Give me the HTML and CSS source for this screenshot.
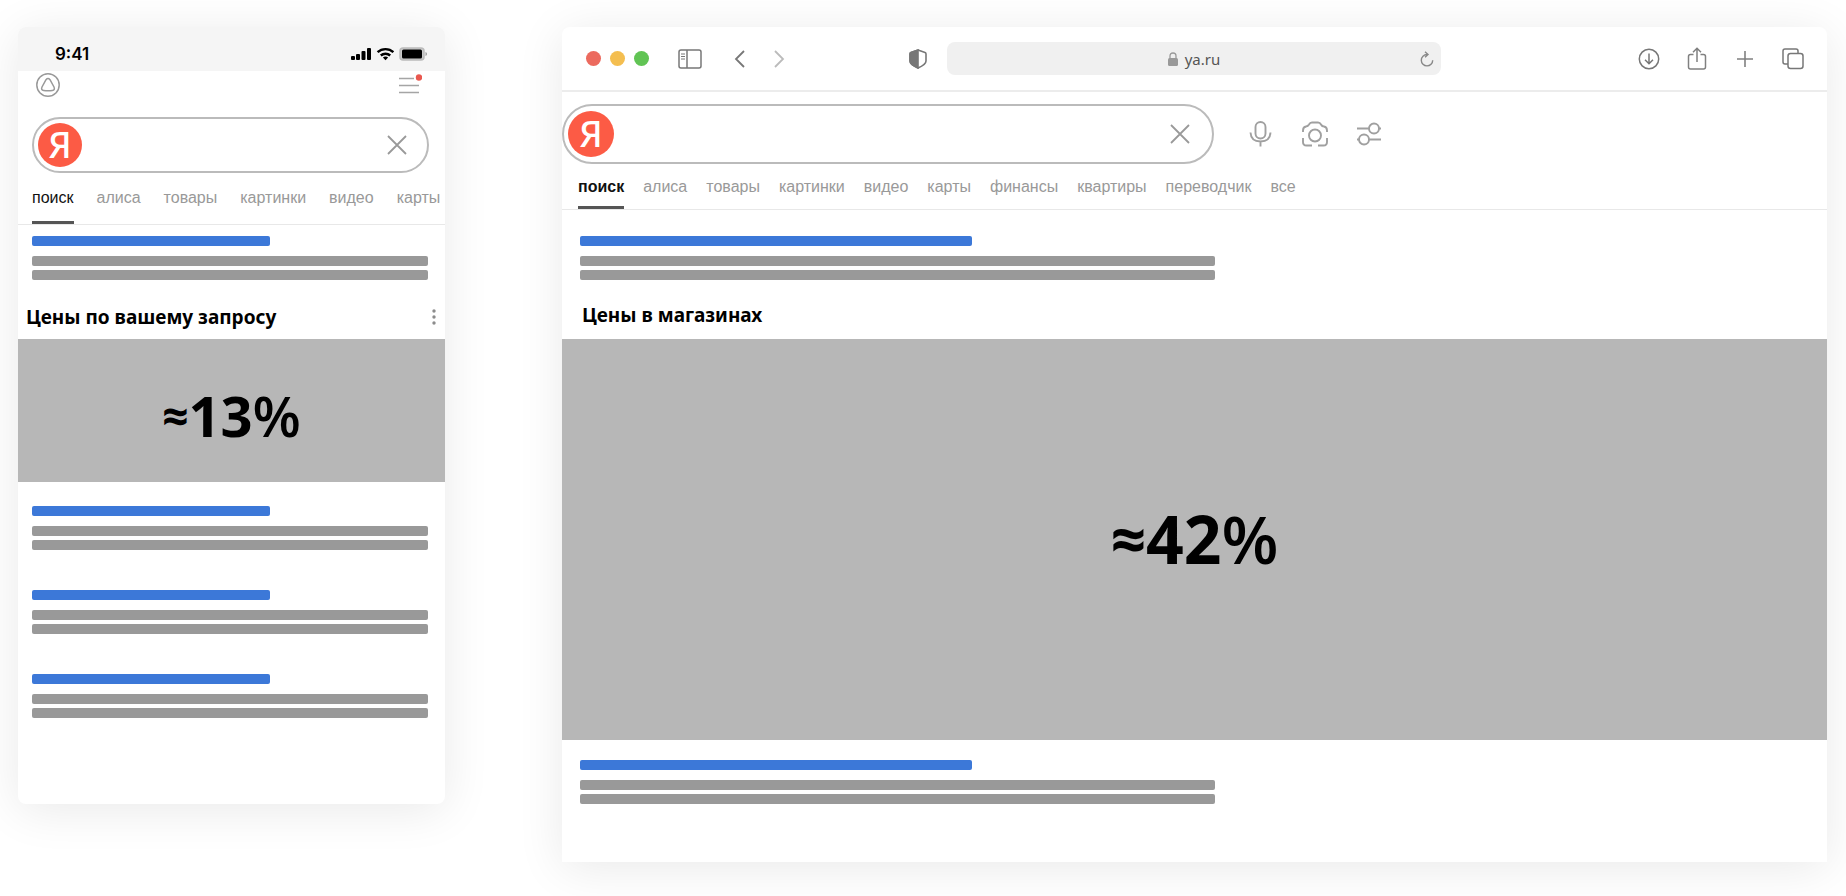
FILE: index.html
```html
<!DOCTYPE html>
<html lang="ru">
<head>
<meta charset="utf-8">
<title>Цены в поиске</title>
<link rel="stylesheet" href="styles.css">
</head>
<body>
<main class="stage">
  <section class="screen phone" aria-label="Мобильная версия">
    <header class="status">
      <span class="clock">9:41</span>
      <svg width="76" height="14" viewBox="0 0 76 14" aria-hidden="true">
        <rect x="0" y="9" width="4" height="4" rx="1"/><rect x="5" y="7" width="4" height="6" rx="1"/><rect x="10.500" y="4" width="4" height="9" rx="1"/><rect x="16" y="1" width="4" height="12" rx="1"/>
        <g fill="none" stroke="#000" stroke-width="2.400"><path d="M26.600 5.200a11.600 11.600 0 0 1 15.800 0"/><path d="M29.800 8.500a7 7 0 0 1 9.400 0"/></g>
        <path d="M34.500 13.300l-2.600-2.700a3.800 3.800 0 0 1 5.200 0z"/>
        <rect x="49" y="1" width="24" height="12" rx="3" fill="#ccc" stroke="#bbb" stroke-width="1.500"/><rect x="51" y="2.500" width="20" height="9" rx="1.500"/><path d="M74.500 5v4q1.500-.5 1.500-2t-1.500-2z" fill="#999"/>
      </svg>
    </header>
    <div class="phone-top">
      <a href="#" class="icon" aria-label="Алиса"><svg width="24" height="24" viewBox="0 0 24 24" fill="none" stroke="#999" stroke-width="1.500"><circle cx="12" cy="12" r="11.200"/><path d="M10 6.700q2-2.400 4 0l4 7.300q1.300 3-1.700 3.500-4.300.7-8.600 0-3-.5-1.700-3.500z"/></svg></a>
      <button class="icon" aria-label="Меню"><svg width="24" height="24" viewBox="0 0 24 24"><path d="M1 5.500h15M1 12.500h20M1 19.500h20" stroke="#a5a5a5" stroke-width="1.700"/><circle cx="21" cy="4.500" r="3.200" fill="#e9584f"/></svg></button>
    </div>
    <form class="search">
      <a href="#" class="logo" aria-label="Яндекс">Я</a>
      <input type="text" aria-label="Запрос">
      <button type="reset" class="icon" aria-label="Очистить"><svg width="20" height="20" viewBox="0 0 20 20"><path d="M1 1l18 18M19 1L1 19" stroke="#999" stroke-width="1.800"/></svg></button>
    </form>
    <nav class="tabs">
      <a href="#" class="active">поиск</a><a href="#">алиса</a><a href="#">товары</a><a href="#">картинки</a><a href="#">видео</a><a href="#">карты</a>
    </nav>
    <div class="result"><i></i><b></b><b></b></div>
    <div class="heading"><h2>Цены по вашему запросу</h2>
      <button class="icon" aria-label="Ещё"><svg width="6" height="16" viewBox="0 0 6 16" fill="#8c8c8c"><circle cx="3" cy="2" r="1.700"/><circle cx="3" cy="8" r="1.700"/><circle cx="3" cy="14" r="1.700"/></svg></button></div>
    <div class="share"><span class="approx">≈</span>13<span class="percent">%</span></div>
    <div class="results">
      <div class="result"><i></i><b></b><b></b></div>
      <div class="result"><i></i><b></b><b></b></div>
      <div class="result"><i></i><b></b><b></b></div>
    </div>
  </section>

  <section class="screen browser" aria-label="Версия для компьютера">
    <header class="toolbar">
      <div class="tools-left">
        <div class="lights"><span class="red"></span><span class="yellow"></span><span class="green"></span></div>
        <button class="icon side" aria-label="Боковая панель"><svg width="24" height="20" viewBox="0 0 24 20" fill="none" stroke="#777" stroke-width="1.500"><rect x="1" y="1" width="22" height="18" rx="2"/><path d="M9 1v18"/><path d="M3 5h4M3 7.500h4M3 10h4" stroke-width="1"/></svg></button>
        <button class="icon back" aria-label="Назад"><svg width="12" height="18" viewBox="0 0 12 18" fill="none" stroke="#777" stroke-width="1.800"><path d="M10 1L2 9l8 8"/></svg></button>
        <button class="icon next" aria-label="Вперёд"><svg width="12" height="18" viewBox="0 0 12 18" fill="none" stroke="#bbb" stroke-width="1.800"><path d="M2 1l8 8-8 8"/></svg></button>
        <button class="icon shield" aria-label="Защита"><svg width="18" height="20" viewBox="0 0 18 20" fill="none" stroke="#777" stroke-width="1.600"><path d="M9 1l7 2.500q1 .4 1 1.500v7q0 3.500-8 7-8-3.500-8-7V5q0-1.100 1-1.500z"/><path d="M9 1v18q-8-3.500-8-7V5q0-1.100 1-1.500z" fill="#777"/></svg></button>
      </div>
      <div class="address">
        <svg width="10" height="14" viewBox="0 0 10 14" aria-hidden="true"><path d="M2 7V4q0-3 3-3t3 3v3" fill="none" stroke="#999" stroke-width="1.300"/><rect y="6" width="10" height="8" rx="1.500" fill="#999"/></svg>
        <span>ya.ru</span>
        <button class="icon reload" aria-label="Обновить"><svg width="14" height="16" viewBox="0 0 14 16" fill="none" stroke="#888" stroke-width="1.400"><path d="M8 3.500H7a5.700 5.700 0 1 0 5.700 5.700M5 .8l3 2.700-3 2.800"/></svg></button>
      </div>
      <div class="tools-right">
        <button class="icon" aria-label="Загрузки"><svg width="22" height="24" viewBox="0 0 22 24" fill="none" stroke="#777" stroke-width="1.500"><circle cx="11" cy="12" r="9.700"/><path d="M11 6.500v10M7 12.800l4 4 4-4"/></svg></button>
        <button class="icon" aria-label="Поделиться"><svg width="22" height="24" viewBox="0 0 22 24" fill="none" stroke="#808080" stroke-width="1.500"><path d="M7.500 7.500H4.500q-2 0-2 2V20q0 2 2 2h13q2 0 2-2V9.500q0-2-2-2h-3M11 15V1.500M7 5.300l4-4 4 4"/></svg></button>
        <button class="icon" aria-label="Новая вкладка"><svg width="22" height="24" viewBox="0 0 22 24" stroke="#808080" stroke-width="1.600"><path d="M3 12h16M11 4v16"/></svg></button>
        <button class="icon" aria-label="Все вкладки"><svg width="22" height="24" viewBox="0 0 22 24" fill="none" stroke="#777" stroke-width="1.500"><rect x="6" y="6.500" width="15" height="15" rx="2.500"/><path d="M6 17H3q-2 0-2-2V4q0-2 2-2h11q2 0 2 2v2.500"/></svg></button>
      </div>
    </header>
    <div class="search-row">
      <form class="search">
        <a href="#" class="logo" aria-label="Яндекс">Я</a>
        <input type="text" aria-label="Запрос">
        <button type="reset" class="icon" aria-label="Очистить"><svg width="20" height="20" viewBox="0 0 20 20"><path d="M1 1l18 18M19 1L1 19" stroke="#999" stroke-width="1.800"/></svg></button>
      </form>
      <button class="icon" aria-label="Голосовой поиск"><svg width="26" height="26" viewBox="0 0 26 26" fill="none" stroke="#a0a0a0" stroke-width="1.900"><rect x="7.500" y="1" width="10" height="16.500" rx="5"/><path d="M2.500 11.500q.5 9 10 9t10-9M12.500 20.500v5"/></svg></button>
      <button class="icon" aria-label="Поиск по картинке"><svg width="26" height="26" viewBox="0 0 26 26" fill="none" stroke="#a0a0a0" stroke-width="1.900"><circle cx="13" cy="14.500" r="6"/><path d="M1 11V9.500Q1 6 4 5.500q2-.2 3-2Q8 1.500 10 1.500h6q2 0 3 2t3 2q3 .5 3 4V11M1 17v4q0 3.500 3.500 3.500H10M25 17v4q0 3.500-3.500 3.500H16"/></svg></button>
      <button class="icon" aria-label="Настройки"><svg width="26" height="26" viewBox="0 0 26 26" fill="none" stroke="#a0a0a0" stroke-width="1.900"><path d="M1 7.500h12M23 7.500h2M1 18.500h2M13 18.500h12"/><circle cx="18" cy="7.500" r="5"/><circle cx="8" cy="18.500" r="5"/></svg></button>
    </div>
    <nav class="tabs">
      <a href="#" class="active">поиск</a><a href="#">алиса</a><a href="#">товары</a><a href="#">картинки</a><a href="#">видео</a><a href="#">карты</a><a href="#">финансы</a><a href="#">квартиры</a><a href="#">переводчик</a><a href="#">все</a>
    </nav>
    <div class="result"><i></i><b></b><b></b></div>
    <div class="heading"><h2>Цены в магазинах</h2></div>
    <div class="share"><span class="approx">≈</span>42<span class="percent">%</span></div>
    <div class="results"><div class="result"><i></i><b></b><b></b></div></div>
  </section>
</main>
</body>
</html>
```
FILE: styles.css
```css
* { box-sizing: border-box; }
body { margin: 0; background: #fff; font-family: "Liberation Sans", Arial, sans-serif; color: #000; }
a { color: inherit; text-decoration: none; }
svg { display: block; flex: none; }
.icon { display: block; flex: none; padding: 0; border: 0; background: none; }

.stage {
  display: grid;
  grid-template-columns: minmax(0, 427fr) minmax(0, 1265fr);
  gap: 117px;
  align-items: start;
  padding: 27px 19px 34px 18px;
}
.screen {
  background: #fff;
  box-shadow: 0 6px 48px rgba(0, 0, 0, .09);
  overflow: hidden;
}
.phone { border-radius: 8px; padding-bottom: 86px; }
.browser { border-radius: 8px 8px 0 0; padding-bottom: 58px; }

/* phone header */
.status {
  display: flex;
  justify-content: space-between;
  align-items: center;
  height: 44px;
  padding: 10px 18px 0 37px;
  background: #f5f5f5;
}
.clock { font: 600 17px/20px Inter, sans-serif; }
.phone-top { display: flex; justify-content: space-between; padding: 2px 23px 0 18px; }

/* search field */
.search {
  display: flex;
  align-items: center;
  border: 2px solid #bbb;
  border-radius: 30px;
  background: #fff;
}
.search input { flex: 1; min-width: 0; border: 0; outline: 0; background: none; font-size: 18px; }
.logo {
  display: grid;
  place-items: center;
  flex: none;
  border-radius: 50%;
  background: #fc5b45;
  color: #fff;
  font: 500 36px/44px "Noto Sans", sans-serif;
}
.phone .search { height: 56px; margin: 20px 16px 0 14px; padding: 0 20px 0 4px; }
.phone .logo { width: 44px; height: 44px; }
.browser .search { flex: 0 1 652px; height: 60px; padding: 0 22px 0 4px; }
.browser .logo { width: 46px; height: 46px; }
.search-row { display: flex; align-items: center; gap: 28px; padding-top: 12px; }
.search-row .search { margin-right: 6px; }

/* tabs */
.tabs {
  display: flex;
  overflow: hidden;
  border-bottom: 1px solid #e8e8e8;
  color: #999;
  font-size: 16px;
  white-space: nowrap;
}
.tabs a { flex: none; border-bottom: 3px solid transparent; }
.tabs .active { color: #111; border-color: #555; }
.phone .tabs { gap: 23px; margin-bottom: 11px; padding-left: 14px; line-height: 49px; }
.phone .tabs a { height: 51px; }
.browser .tabs { gap: 19px; margin-bottom: 26px; padding: 3px 0 0 16px; line-height: 40px; }
.browser .tabs a { height: 42px; }
.browser .active { font-weight: 700; }

/* placeholder results */
.result { display: grid; gap: 4px; }
.result i, .result b { height: 10px; border-radius: 2px; background: #999; }
.result i { margin-bottom: 6px; background: #3c78d8; }
.phone .result { margin: 0 17px 0 14px; }
.phone .result i { width: 60%; }
.browser .result { width: 50.2%; margin-left: 18px; }
.browser .result i { width: 61.7%; }
.results { display: grid; gap: 40px; padding-top: 24px; }
.browser .results { padding-top: 20px; }

/* price block */
.heading { display: flex; justify-content: space-between; align-items: center; height: 59px; }
.heading h2 { margin: 0; font: 700 19px/28px "Noto Sans", sans-serif; white-space: nowrap; }
.phone .heading { padding: 14px 8px 0 8px; }
.browser .heading { padding: 10px 20px 0 20px; }
.share {
  display: flex;
  align-items: center;
  justify-content: center;
  background: #b7b7b7;
  font-family: "Open Sans", sans-serif;
  font-weight: 700;
}
.phone .share { height: 143px; padding-top: 8px; font-size: 56px; }
.browser .share { height: 401px; padding-bottom: 4px; font-size: 66px; }
.phone .approx { font-size: 46px; }
.browser .approx { font-size: 62px; }
.percent { font-weight: 600; }

/* browser toolbar */
.toolbar {
  display: grid;
  grid-template-columns: 385fr 494fr 386fr;
  align-items: center;
  height: 65px;
  border-bottom: 2px solid #ececec;
}
.tools-left { display: flex; align-items: center; padding: 0 20px 0 24px; }
.lights { display: flex; gap: 9px; margin-right: 29px; }
.lights span { width: 15px; height: 15px; border-radius: 50%; }
.red { background: #ec6a5e; }
.yellow { background: #f4be50; }
.green { background: #61c454; }
.side { margin-right: 32px; }
.back { margin-right: 27px; }
.shield { margin-left: auto; }
.address {
  display: flex;
  align-items: center;
  justify-content: center;
  gap: 7px;
  height: 33px;
  border-radius: 8px;
  background: #f0f0f0;
  color: #555;
  font: 15px/24px "Noto Sans", sans-serif;
  position: relative;
}
.reload { position: absolute; right: 7px; top: 9px; }
.tools-right { display: flex; justify-content: flex-end; gap: 26px; padding-right: 23px; }
```
